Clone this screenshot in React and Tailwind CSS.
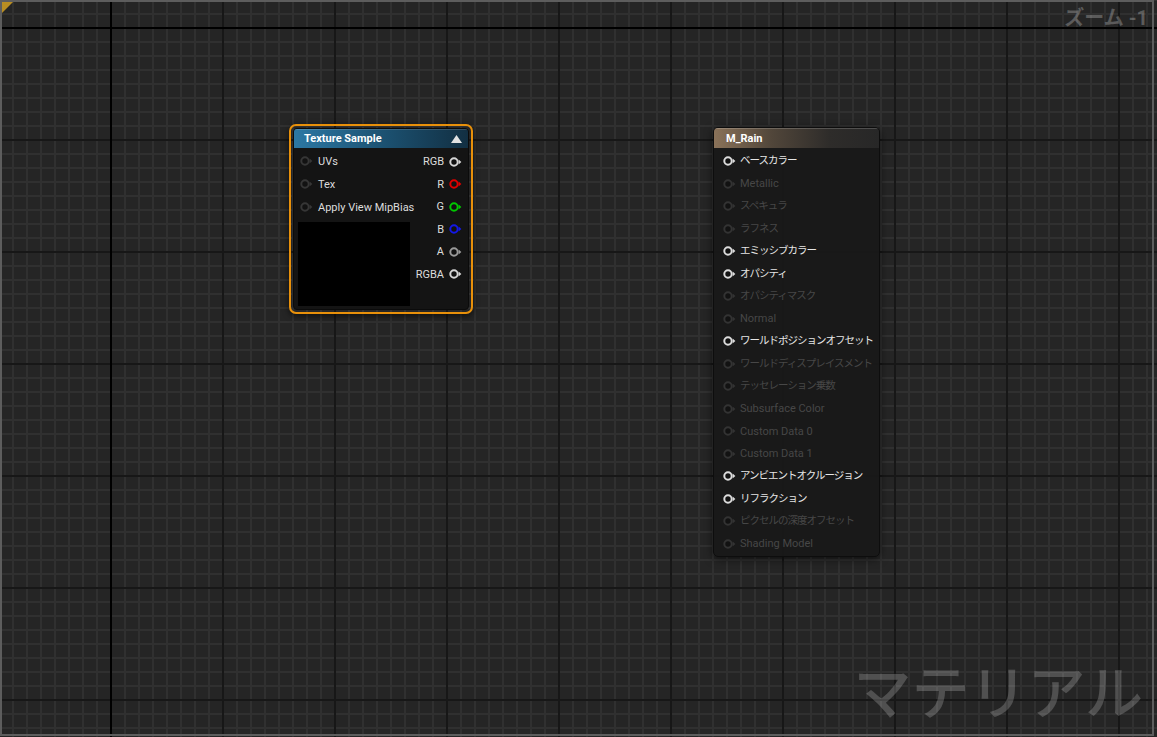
import React from 'react'

const textureInputs = ['UVs', 'Tex', 'Apply View MipBias']

const textureOutputs = [
  { label: 'RGB', color: '#d6d6d6' },
  { label: 'R', color: '#e00000' },
  { label: 'G', color: '#00c800' },
  { label: 'B', color: '#1418e8' },
  { label: 'A', color: '#9a9a9a' },
  { label: 'RGBA', color: '#d6d6d6' },
]

const materialPins = [
  ['ベースカラー', true],
  ['Metallic', false],
  ['スペキュラ', false],
  ['ラフネス', false],
  ['エミッシブカラー', true],
  ['オパシティ', true],
  ['オパシティマスク', false],
  ['Normal', false],
  ['ワールドポジションオフセット', true],
  ['ワールドディスプレイスメント', false],
  ['テッセレーション乗数', false],
  ['Subsurface Color', false],
  ['Custom Data 0', false],
  ['Custom Data 1', false],
  ['アンビエントオクルージョン', true],
  ['リフラクション', true],
  ['ピクセルの深度オフセット', false],
  ['Shading Model', false],
]

const isJapanese = (s) => /[^\x00-\x7F]/.test(s)

function Pin({ color = '#353535' }) {
  return (
    <svg width="13" height="10" viewBox="0 0 13 10" className="shrink-0">
      <circle cx="5" cy="5" r="3.7" fill="#121212" stroke={color} strokeWidth="2" />
      <path d="M9.6 2.6 L12.4 5 L9.6 7.4 Z" fill={color} />
    </svg>
  )
}

function TextureSampleNode() {
  return (
    <div className="absolute left-[289px] top-[124px] w-[184px] h-[190px] rounded-[7px] border-2 border-[#e8900a] p-[2px] shadow-[0_2px_6px_rgba(0,0,0,0.6)]">
      <div className="flex flex-col h-full rounded-[4px] overflow-hidden bg-[#141414] border border-[#0b0b0b]">
        <div className="flex items-center justify-between h-[19px] pl-[10px] pr-[6px] bg-[linear-gradient(to_right,#2c78a4,#1b4f6e_55%,#122f42)] shadow-[inset_0_1px_0_rgba(255,255,255,0.15)]">
          <span className="text-[11px] font-bold text-white leading-none">Texture Sample</span>
          <svg width="11" height="8" viewBox="0 0 11 8">
            <path d="M5.5 0 L11 8 L0 8 Z" fill="#e2e2e2" />
          </svg>
        </div>
        <div className="flex justify-between pt-[1.5px] pl-[4px] pr-[6px]">
          <div className="flex flex-col">
            {textureInputs.map((label) => (
              <div key={label} className="flex items-center gap-[5px] h-[23px] pl-[2px]">
                <Pin color="#363636" />
                <span className="text-[11px] text-[#dcdcdc] leading-none">{label}</span>
              </div>
            ))}
            <div className="mt-[3px] w-[112px] h-[84px] bg-black" />
          </div>
          <div className="flex flex-col items-end pt-[1px]">
            {textureOutputs.map((pin) => (
              <div key={pin.label} className="flex items-center gap-[5px] h-[22.5px]">
                <span className="text-[11px] text-[#dcdcdc] leading-none">{pin.label}</span>
                <Pin color={pin.color} />
              </div>
            ))}
          </div>
        </div>
      </div>
    </div>
  )
}

function MaterialNode() {
  return (
    <div className="absolute left-[713px] top-[127px] w-[167px] h-[430px] flex flex-col rounded-[5px] overflow-hidden bg-[#181818]/95 border border-[#0d0d0d] shadow-[0_2px_8px_rgba(0,0,0,0.6)]">
      <div className="flex items-center h-[20px] px-[12px] bg-[linear-gradient(to_right,#8a7259,#51463a_35%,#2e2c2a_70%,#272727)] shadow-[inset_0_1px_0_rgba(255,255,255,0.18)]">
        <span className="text-[11px] font-bold text-white leading-none">M_Rain</span>
      </div>
      <div className="flex flex-col pt-[2px] pl-[9px]">
        {materialPins.map(([label, active]) => (
          <div key={label} className="flex items-center gap-[4px] h-[22.5px]">
            <Pin color={active ? '#dcdcdc' : '#333333'} />
            <span
              className={
                (isJapanese(label) ? 'text-[10.5px] tracking-[-1px] ' : 'text-[11px] ') +
                (active ? 'text-[#e6e6e6]' : 'text-[#474747]') +
                ' leading-none whitespace-nowrap'
              }
            >
              {label}
            </span>
          </div>
        ))}
      </div>
    </div>
  )
}

export default function App() {
  return (
    <div className="relative w-[1157px] h-[737px] overflow-hidden bg-[#252525] bg-[linear-gradient(to_right,#000_2px,transparent_2px),linear-gradient(to_bottom,#000_2px,transparent_2px),linear-gradient(to_right,#171717_2px,transparent_2px),linear-gradient(to_bottom,#171717_2px,transparent_2px),linear-gradient(to_right,#303030_2px,transparent_2px),linear-gradient(to_bottom,#303030_2px,transparent_2px)] [background-size:2000px_2000px,2000px_2000px,112px_112px,112px_112px,14px_14px,14px_14px] [background-position:110px_27px] font-['Roboto','Noto_Sans_CJK_JP',sans-serif]">
      <TextureSampleNode />
      <MaterialNode />

      <div className="absolute top-[8px] right-[9px] text-[20px] font-bold text-white/25 leading-none">
        ズーム -1
      </div>

      <div className="absolute right-[14px] bottom-[14px] text-[58px] font-medium text-white/20 leading-none">
        マテリアル
      </div>

      <div className="pointer-events-none absolute left-0 top-0 w-[1154px] h-[736px] border-2 border-[#5d5d5d]" />
      <svg className="absolute left-[2px] top-[2px]" width="11" height="11" viewBox="0 0 11 11">
        <path d="M0 0 L11 0 L0 11 Z" fill="#b88d22" />
      </svg>
    </div>
  )
}
